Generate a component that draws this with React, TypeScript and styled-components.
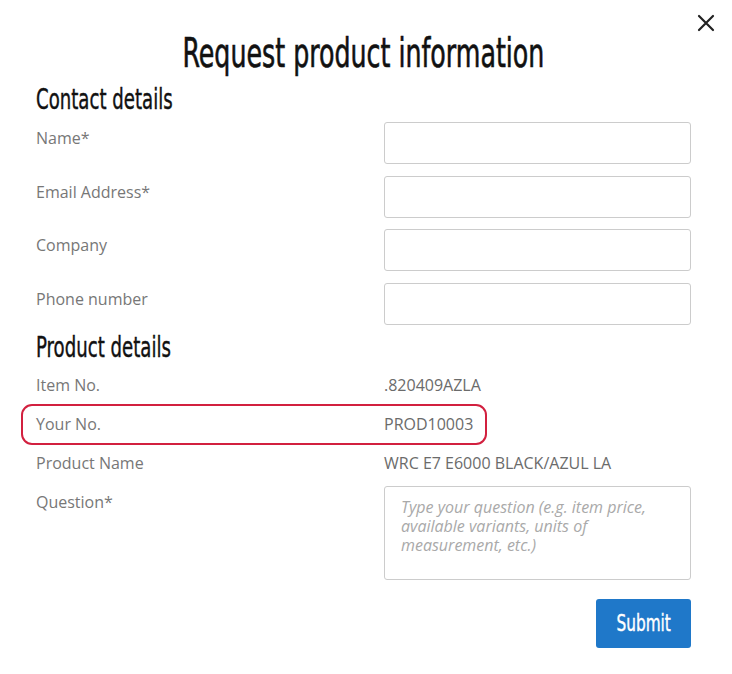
import React from 'react'
import styled, { createGlobalStyle } from 'styled-components'

const GlobalStyle = createGlobalStyle`
  html, body {
    margin: 0;
    padding: 0;
    background: #fff;
  }
  body {
    font-family: "Open Sans", "Liberation Sans", sans-serif;
  }
`

const contactFields = [
    { key: 'name', label: 'Name*' },
    { key: 'email', label: 'Email Address*' },
    { key: 'company', label: 'Company' },
    { key: 'phone', label: 'Phone number' },
]

const productInfo = [
    { key: 'item', label: 'Item No.', value: '.820409AZLA' },
    { key: 'yours', label: 'Your No.', value: 'PROD10003', marked: true },
    { key: 'pname', label: 'Product Name', value: 'WRC E7 E6000 BLACK/AZUL LA' },
]

const App = () => {
    return (
        <>
            <GlobalStyle />
            <Modal>
                <Close aria-label="Close">
                    <svg width="18" height="18" viewBox="0 0 18 18">
                        <path d="M2 2L16 16M16 2L2 16" stroke="#222" strokeWidth="2.2" strokeLinecap="round" />
                    </svg>
                </Close>

                <Title><span>Request product information</span></Title>

                <Section><span>Contact details</span></Section>
                <Fields>
                    {contactFields.map(f => (
                        <InputRow key={f.key}>
                            <Label>{f.label}</Label>
                            <Input type="text" />
                        </InputRow>
                    ))}
                </Fields>

                <Section $product><span>Product details</span></Section>
                <Details>
                    {productInfo.map(p => (
                        <InfoRow key={p.key} $marked={p.marked}>
                            <Label>{p.label}</Label>
                            <Value>{p.value}</Value>
                        </InfoRow>
                    ))}
                    <QuestionRow>
                        <Label>Question*</Label>
                        <Question placeholder="Type your question (e.g. item price, available variants, units of measurement, etc.)" />
                    </QuestionRow>
                </Details>

                <Actions>
                    <Submit type="button"><span>Submit</span></Submit>
                </Actions>
            </Modal>
        </>
    )
}

export default App



const Modal = styled.div`
position:relative;
width:732px;
height:674px;
box-sizing:border-box;
padding:29px 41px 0 36px;
background:#fff;
`

const Close = styled.button`
position:absolute;
top:14px;
right:17px;
width:18px;
height:18px;
padding:0;
border:none;
background:none;
display:flex;
`

const condensed = `
font-family:"Liberation Sans Narrow","DejaVu Sans Condensed","Liberation Sans",sans-serif;
font-weight:400;
color:#111;
`

const Title = styled.h1`
${condensed}
margin:0;
height:48px;
font-size:40px;
line-height:48px;
text-align:center;
-webkit-text-stroke:0.6px #111;
span{
    display:inline-block;
    transform:scaleX(0.703);
}
`

const Section = styled.h2<{ $product?: boolean }>`
${condensed}
margin:${p => p.$product ? '6px 0 0' : '6px 0 0'};
height:34px;
font-size:28px;
line-height:34px;
-webkit-text-stroke:0.4px #111;
span{
    display:inline-block;
    transform:scaleX(0.72);
    transform-origin:left center;
}
`

const Fields = styled.div`
display:flex;
flex-direction:column;
gap:11.6px;
margin-top:5px;
`

const InputRow = styled.div`
display:grid;
grid-template-columns:348px 1fr;
align-items:start;
${() => Label}{
    padding-top:5px;
}
`

const Label = styled.label`
font-size:16px;
line-height:22px;
color:#777;
`

const Input = styled.input`
box-sizing:border-box;
height:42px;
width:100%;
border:1px solid #ccc;
border-radius:3px;
`

const Details = styled.div`
display:flex;
flex-direction:column;
margin-top:1px;
`

const InfoRow = styled.div<{ $marked?: boolean }>`
display:grid;
grid-template-columns:348px 1fr;
align-items:center;
height:39px;
box-sizing:border-box;
${p => p.$marked && `
    margin:-1px 204px -1px -15px;
    padding-left:13px;
    border:2px solid #d2203f;
    border-radius:11px;
    height:41px;
`}
`

const Value = styled.div`
font-size:16px;
line-height:22px;
color:#6b6b6b;
`

const QuestionRow = styled.div`
display:grid;
grid-template-columns:348px 1fr;
align-items:start;
margin-top:3px;
${() => Label}{
    padding-top:5px;
}
`

const Question = styled.textarea`
box-sizing:border-box;
width:100%;
height:94px;
border:1px solid #ccc;
border-radius:3px;
padding:11px 16px;
resize:none;
font-family:"Open Sans","Liberation Sans",sans-serif;
font-size:16px;
line-height:19px;
&::placeholder{
    color:#a9a9a9;
    font-style:italic;
}
`

const Actions = styled.div`
display:flex;
justify-content:flex-end;
margin-top:19px;
`

const Submit = styled.button`
width:95px;
height:49px;
border:none;
border-radius:3px;
background:#1f78c9;
color:#fff;
font-family:"Liberation Sans Narrow","DejaVu Sans Condensed","Liberation Sans",sans-serif;
font-size:23px;
padding:0;
-webkit-text-stroke:0.4px #fff;
span{
    display:inline-block;
    transform:scaleX(0.74);
}
`
